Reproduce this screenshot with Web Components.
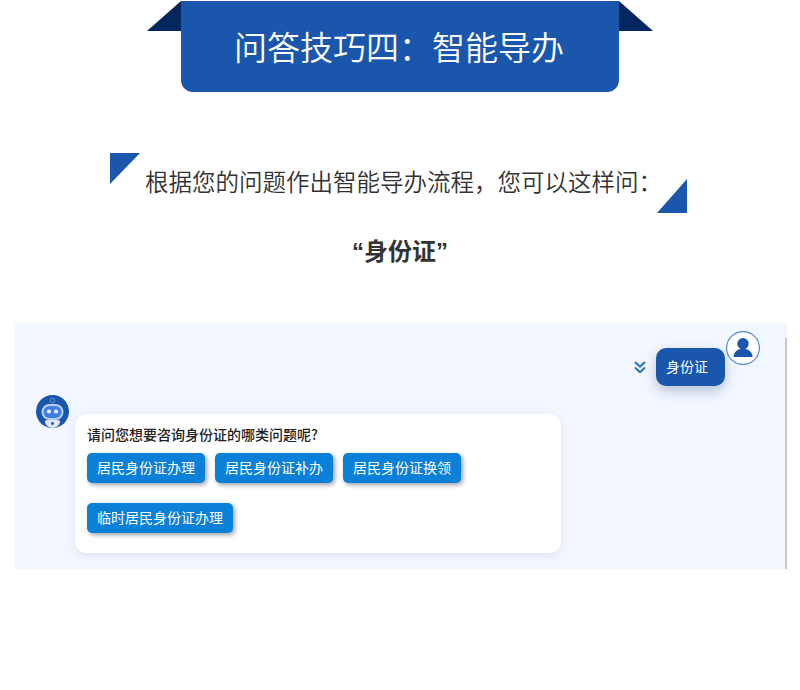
<!DOCTYPE html>
<html lang="zh-CN">
<head>
<meta charset="utf-8">
<title>问答技巧四</title>
<style>
    html, body { margin: 0; background: #fff; }
    body { font-family: "Noto Sans CJK SC", "Noto Sans", sans-serif; width: 800px; height: 690px; overflow: hidden; }
</style>
</head>
<body>

<tip-banner>问答技巧四：智能导办</tip-banner>
<tip-intro quote="身份证">根据您的问题作出智能导办流程，您可以这样问：</tip-intro>

<chat-panel>
    <user-msg>身份证</user-msg>
    <bot-msg title-text="请问您想要咨询身份证的哪类问题呢?">
        <chat-option>居民身份证办理</chat-option>
        <chat-option>居民身份证补办</chat-option>
        <chat-option>居民身份证换领</chat-option>
        <chat-option>临时居民身份证办理</chat-option>
    </bot-msg>
</chat-panel>

<script>
class TipBanner extends HTMLElement {
    constructor() {
        super();
        this.attachShadow({ mode: 'open' });
        this.shadowRoot.innerHTML = `
        <style>
            :host { display: flex; justify-content: center; padding-top: 1px; }
            .wing { width: 34px; height: 30px; background: #03265f; }
            .left { clip-path: polygon(100% 0, 100% 100%, 0 100%); }
            .right { clip-path: polygon(0 0, 100% 100%, 0 100%); }
            .ribbon {
                width: 438px; height: 91px; box-sizing: border-box;
                background: #1a56ab; color: #fff;
                border-radius: 0 0 12px 12px;
                display: flex; justify-content: center; align-items: center;
                font-size: 33px; font-weight: 350; line-height: 1; padding-right: 2px;
            }
        </style>
        <div class="wing left"></div>
        <div class="ribbon"><slot></slot></div>
        <div class="wing right"></div>`;
    }
}

class TipIntro extends HTMLElement {
    constructor() {
        super();
        this.attachShadow({ mode: 'open' });
        this.shadowRoot.innerHTML = `
        <style>
            :host { display: block; padding-top: 61px; }
            .line {
                position: relative; width: 577px; height: 60px; margin-left: 110px;
                box-sizing: border-box; padding: 11px 0 0 35px;
                font-size: 23.5px; line-height: 34px; color: #333; white-space: nowrap; font-weight: 350;
            }
            .line::before, .line::after { content: ""; position: absolute; background: #1a56ab; }
            .line::before { left: 0; top: 0; width: 30px; height: 31px; clip-path: polygon(0 0, 100% 0, 0 100%); }
            .line::after { right: 0; top: 26px; width: 30px; height: 34px; clip-path: polygon(100% 0, 100% 100%, 0 100%); }
            .quote {
                margin-top: 19px; text-align: center;
                font-size: 24px; line-height: 36px; font-weight: 700; color: #333;
            }
            .quote span { font-family: "Liberation Sans", sans-serif; }
        </style>
        <div class="line"><slot></slot></div>
        <div class="quote"><span>“</span>${this.getAttribute('quote')}<span>”</span></div>`;
    }
}

class ChatPanel extends HTMLElement {
    constructor() {
        super();
        this.attachShadow({ mode: 'open' });
        this.shadowRoot.innerHTML = `
        <style>
            :host {
                display: flex; flex-direction: column; gap: 9px;
                position: relative;
                width: 772px; height: 246px; box-sizing: border-box;
                margin: 53px 0 0 15px; padding: 8px 27px 16px 21px;
                background: #f2f6ff;
            }
            .bar { position: absolute; right: 0; top: 15px; bottom: 0; width: 2px; background: #c8c8cc; }
        </style>
        <div class="bar"></div>
        <slot></slot>`;
    }
}

class UserMsg extends HTMLElement {
    constructor() {
        super();
        this.attachShadow({ mode: 'open' });
        this.shadowRoot.innerHTML = `
        <style>
            :host { display: flex; justify-content: flex-end; align-items: flex-start; }
            .chev { width: 14px; height: 16px; margin: 28px 9px 0 0; }
            .bubble {
                width: 69px; height: 38px; box-sizing: border-box; margin: 17px 1px 0 0;
                padding-left: 10px;
                background: #1a56ab; color: #fff; border-radius: 10px;
                font-size: 14px; line-height: 37px;
                box-shadow: 0 5px 12px rgba(30, 60, 110, .28);
            }
            .avatar { width: 34px; height: 34px; display: block; }
        </style>
        <svg class="chev" viewBox="0 0 14 16" fill="none" stroke="#1a6fc4" stroke-width="1.9">
            <path d="M2 3l5 4.800L12 3"/><path d="M2 8.500l5 4.800 5-4.800"/>
        </svg>
        <div class="bubble"><slot></slot></div>
        <svg class="avatar" viewBox="0 0 34 34">
            <circle cx="17" cy="17" r="16.400" fill="#fff" stroke="#5a88c6" stroke-width="1.200"/>
            <circle cx="17" cy="12.800" r="5.700" fill="#1a56ab"/>
            <path d="M7.500 26c0-5 4.500-8 7-8h5c2.500 0 7 3 7 8z" fill="#1a56ab"/>
        </svg>`;
    }
}

class BotMsg extends HTMLElement {
    constructor() {
        super();
        this.attachShadow({ mode: 'open' });
        this.shadowRoot.innerHTML = `
        <style>
            :host { display: flex; align-items: flex-start; gap: 6px; }
            .robot { width: 33px; height: 33px; display: block; flex: none; }
            .card {
                width: 486px; height: 139px; box-sizing: border-box; margin-top: 19px;
                padding: 10px 12px 20px;
                background: #fff; border-radius: 12px;
                box-shadow: 0 2px 10px rgba(90, 120, 180, .14);
            }
            .title { font-size: 14px; line-height: 20px; font-weight: 500; color: #222; white-space: nowrap; }
            .options { display: flex; flex-wrap: wrap; gap: 20px 10px; margin-top: 9px; }
        </style>
        <svg class="robot" viewBox="0 0 33 33">
            <circle cx="16.500" cy="16.500" r="16.500" fill="#1a56ab"/>
            <circle cx="16.500" cy="5.500" r="2.200" fill="none" stroke="#6f9ad6" stroke-width="1"/>
            <path d="M9 26c2-2 13-2 15 0 .5 3-3 7-7.500 7S8.500 29 9 26z" fill="#dfe6f2"/>
            <circle cx="16.500" cy="28.500" r="1.400" fill="#1a56ab"/>
            <rect x="5.500" y="9" width="22" height="16" rx="8" fill="#b9d0f0"/>
            <rect x="7.500" y="11" width="18" height="12" rx="6" fill="#3f7fe0"/>
            <circle cx="13" cy="16.500" r="2.100" fill="#e8f2ff"/>
            <circle cx="20" cy="16.500" r="2.100" fill="#e8f2ff"/>
        </svg>
        <div class="card">
            <div class="title">${this.getAttribute('title-text')}</div>
            <div class="options"><slot></slot></div>
        </div>`;
    }
}

class ChatOption extends HTMLElement {
    constructor() {
        super();
        this.attachShadow({ mode: 'open' });
        this.shadowRoot.innerHTML = `
        <style>
            :host {
                display: block; height: 30px; padding: 0 10px;
                background: #0a80d8; color: #fff; border-radius: 5px;
                font-size: 14px; line-height: 29px; white-space: nowrap;
                box-shadow: 2px 2px 4px rgba(60, 70, 90, .5);
            }
        </style>
        <slot></slot>`;
    }
}

customElements.define('tip-banner', TipBanner);
customElements.define('tip-intro', TipIntro);
customElements.define('chat-panel', ChatPanel);
customElements.define('user-msg', UserMsg);
customElements.define('bot-msg', BotMsg);
customElements.define('chat-option', ChatOption);
</script>
</body>
</html>
